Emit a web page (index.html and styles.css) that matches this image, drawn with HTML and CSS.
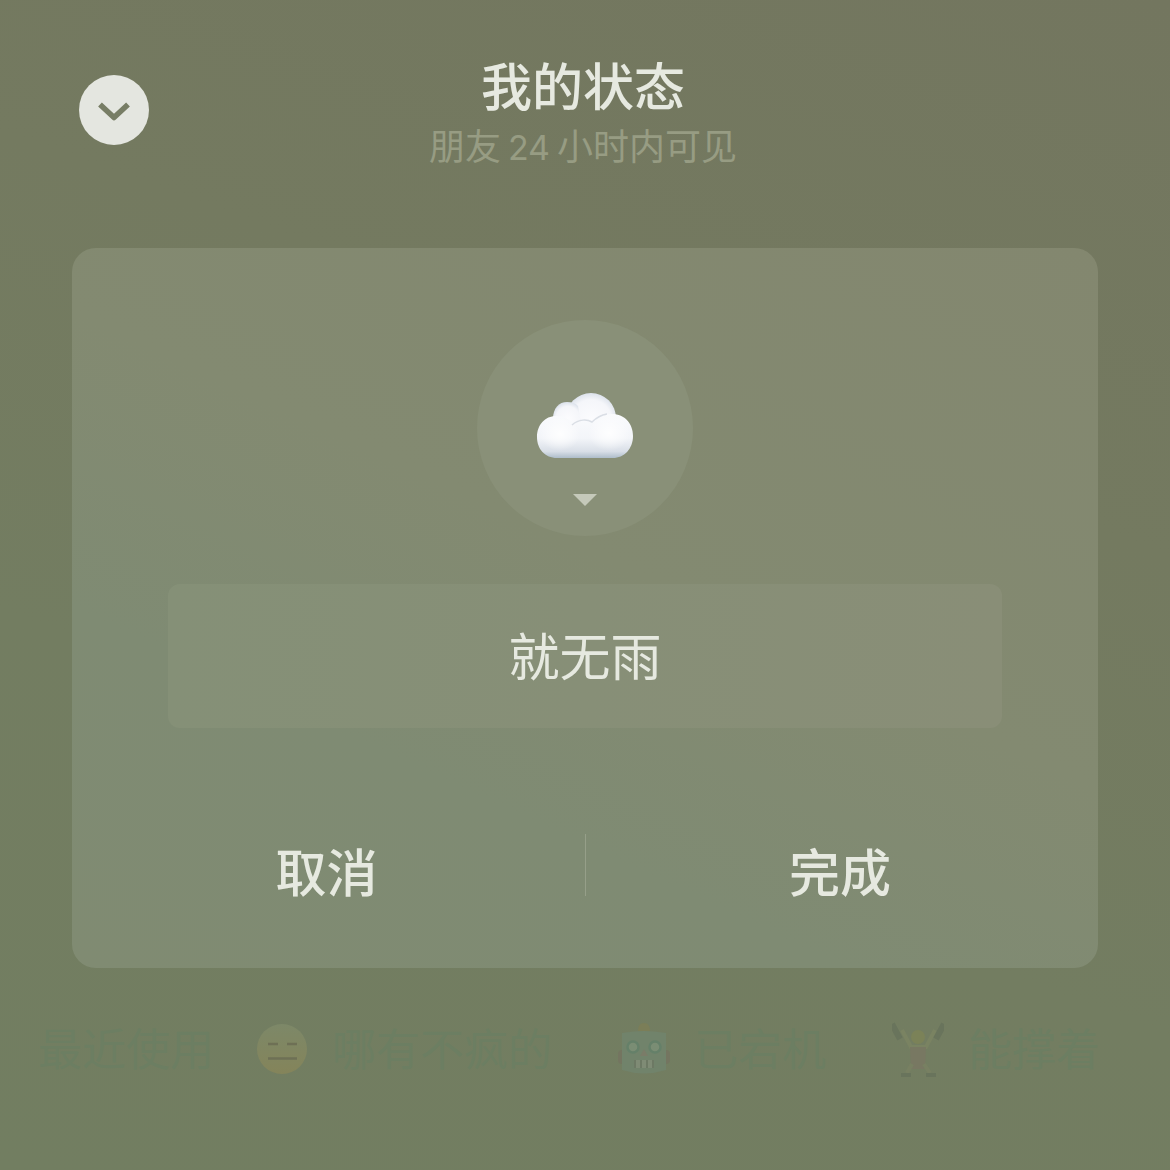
FILE: index.html
```html
<!DOCTYPE html>
<html lang="zh-CN">
<head>
<meta charset="utf-8">
<meta name="viewport" content="width=device-width, initial-scale=1">
<title>我的状态</title>
<link rel="stylesheet" href="styles.css">
</head>
<body>
<main class="page">
  <header class="header">
    <button class="close" type="button" aria-label="收起">
      <svg viewBox="0 0 70 70" aria-hidden="true"><path d="M21 29.500L35 42.500L49 29.500" fill="none" stroke="#777d65" stroke-width="5.500" stroke-linejoin="round"/></svg>
    </button>
    <div class="heading">
      <h1 class="title">我的状态</h1>
      <p class="subtitle">朋友<span class="hours">24</span>小时内可见</p>
    </div>
  </header>

  <form class="card">
    <button class="picker" type="button" aria-label="选择图标">
      <svg class="cloud" viewBox="0 0 98 68" aria-hidden="true">
        <defs>
          <linearGradient id="base" x1="0" y1="0" x2="0" y2="1">
            <stop offset="0" stop-color="#fafbfd"/><stop offset=".55" stop-color="#f3f5f9"/><stop offset=".85" stop-color="#d9dfe7"/><stop offset="1" stop-color="#aebdca"/>
          </linearGradient>
          <radialGradient id="puff" cx=".5" cy=".55" r=".55">
            <stop offset="0" stop-color="#fcfcfe"/><stop offset=".75" stop-color="#f5f6fa"/><stop offset="1" stop-color="#dce2eb"/>
          </radialGradient>
          <radialGradient id="glow" cx=".5" cy=".5" r=".5">
            <stop offset="0" stop-color="#fff" stop-opacity=".9"/><stop offset=".5" stop-color="#fff" stop-opacity=".5"/><stop offset="1" stop-color="#fff" stop-opacity="0"/>
          </radialGradient>
        </defs>
        <circle cx="55" cy="26" r="25" fill="url(#puff)"/>
        <path d="M17 27C17 16 23 10 31 10C36 10 39 11 42 14L47 42H19Z" fill="url(#puff)"/>
        <path d="M20 24C29 24 34 28 37 31C43 27 51 27 56 30C61 25 67 22 76 22C89 22 97 32 97 44C97 57 88 66 77 66H21C9 66 1 57 1 45C1 33 9 24 20 24Z" fill="url(#base)"/>
        <ellipse cx="24" cy="42" rx="20" ry="17" fill="url(#glow)"/>
        <ellipse cx="73" cy="41" rx="21" ry="18" fill="url(#glow)"/>
        <path d="M36 33C43 27 51 27 56 30C60 26 65 23 71 22" fill="none" stroke="#cdd3dc" stroke-width="1.500" opacity=".7"/>
      </svg>
      <svg class="caret" viewBox="0 0 24 12" aria-hidden="true"><path d="M0 0H24L12 12Z" fill="#c5c9ba"/></svg>
    </button>
    <input class="status" type="text" value="就无雨" aria-label="状态">
    <div class="actions">
      <button class="action" type="button">取消</button>
      <button class="action action-done" type="button">完成</button>
    </div>
  </form>

  <section class="recent" aria-label="最近使用">
    <span class="label">最近使用</span>
    <span class="item">
      <svg class="emoji" viewBox="0 0 52 56" aria-hidden="true">
        <defs><linearGradient id="face" x1="0" y1="0" x2="0" y2="1"><stop offset="0" stop-color="#7d8868"/><stop offset="1" stop-color="#84845a"/></linearGradient></defs>
        <circle cx="26" cy="27" r="25" fill="url(#face)"/>
        <path d="M12 22H22M31 22H41M12 36.500H41" stroke="#6e7055" stroke-width="2.500" fill="none"/>
      </svg>哪有不疯的
    </span>
    <span class="item">
      <svg class="emoji" viewBox="0 0 52 56" aria-hidden="true">
        <path d="M20 9C20 4 22 1 26 1S32 4 32 9Z" fill="#7b7e58"/>
        <rect x="0" y="28" width="52" height="14" rx="4" fill="#747560"/>
        <path d="M4 11Q26 7 48 11V48Q26 55 4 48Z" fill="#71836b"/>
        <g fill="#7a8d74" stroke="#658069" stroke-width="2.500"><circle cx="15" cy="25" r="5.500"/><circle cx="37" cy="25" r="5.500"/></g>
        <path d="M26 27L22 34H30Z" fill="#7a7c68"/>
        <rect x="17" y="38" width="18" height="8" fill="#7f8b75"/><path d="M17 38V46M23 38V46M29 38V46M35 38V46" stroke="#6d7964" stroke-width="2"/>
      </svg>已宕机
    </span>
    <span class="item">
      <svg class="emoji" viewBox="0 0 52 56" aria-hidden="true">
        <path d="M10 8L19 25H34L43 8" fill="none" stroke="#7a8362" stroke-width="4"/>
        <path d="M0 2L8 17M52 2L44 17" stroke="#69745c" stroke-width="6"/>
        <circle cx="26" cy="15" r="7" fill="#7b8258"/>
        <path d="M18 25H34L33 47H19Z" fill="#787862"/>
        <path d="M20 42L15 51M32 42L38 51" stroke="#788062" stroke-width="4"/>
        <path d="M9 53H19M34 53H44" stroke="#69745c" stroke-width="4"/>
      </svg>能撑着
    </span>
  </section>
</main>
</body>
</html>
```

FILE: styles.css
```css
* {
  box-sizing: border-box;
}

body {
  margin: 0;
  min-height: 100vh;
  font-family: Inter, "Noto Sans CJK SC", sans-serif;
  color: #e6e9e0;
  background: linear-gradient(200deg, #73765f 0%, #747a60 35%, #737d61 65%, #727e61 100%);
}

button,
input {
  margin: 0;
  padding: 0;
  border: 0;
  background: none;
  color: inherit;
  font: inherit;
}

.page {
  padding: 56px 72px 0;
  overflow: hidden;
}

.header {
  display: grid;
  grid-template-columns: 1fr auto 1fr;
  align-items: start;
  height: 192px;
}

.close {
  width: 70px;
  height: 70px;
  margin: 19px 0 0 7px;
  border-radius: 50%;
  background: #e4e6e0;
}

.close svg {
  display: block;
  width: 100%;
}

.heading {
  padding-right: 4px;
  text-align: center;
}

.title {
  margin: 0;
  font-size: 51px;
  font-weight: 500;
  line-height: 64px;
}

.subtitle {
  margin: 0;
  font-size: 36px;
  line-height: 54px;
  color: #979c83;
}

.hours {
  margin: 0 7px;
  font-size: 34px;
}

.card {
  display: flex;
  flex-direction: column;
  align-items: center;
  padding: 72px 96px;
  border-radius: 24px;
  background: linear-gradient(205deg, #83876f 0%, #838a71 45%, #7f8b73 70%, #808b72 100%);
}

.picker {
  display: flex;
  flex-direction: column;
  align-items: center;
  width: 216px;
  height: 216px;
  padding-top: 72px;
  border-radius: 50%;
  background: #899078;
}

.cloud {
  width: 98px;
  height: 68px;
}

.caret {
  width: 24px;
  height: 12px;
  margin-top: 34px;
}

.status {
  width: 100%;
  height: 144px;
  margin-top: 48px;
  padding-bottom: 4px;
  border-radius: 12px;
  background: linear-gradient(90deg, #859077, #898e77);
  font-size: 51px;
  text-align: center;
}

.actions {
  display: grid;
  grid-template-columns: 1fr 1fr;
  align-self: stretch;
  margin: 106px -96px 0;
}

.action {
  height: 62px;
  padding: 18px 4px 0 0;
  font-size: 51px;
  font-weight: 500;
  line-height: 44px;
}

.action-done {
  border-left: 1px solid #969f89;
}

.recent {
  display: flex;
  align-items: center;
  gap: 42px;
  height: 72px;
  margin: 46px -72px 0;
  padding-left: 38px;
  font-size: 44px;
  line-height: 72px;
  white-space: nowrap;
  color: #6c7e62;
}

.item {
  display: flex;
  align-items: center;
  gap: 24px;
  padding-right: 24px;
}

.emoji {
  width: 52px;
  height: 56px;
}
```
